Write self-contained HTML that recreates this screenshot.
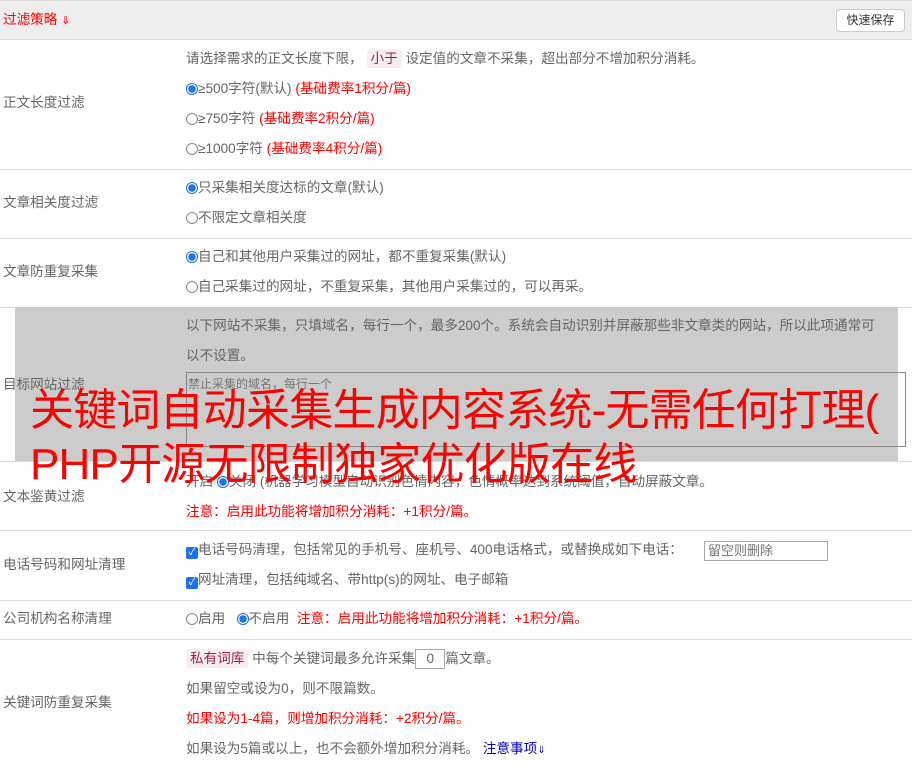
<!DOCTYPE html>
<html><head><meta charset="utf-8"><style>
body{margin:0;width:912px;height:768px;background:#fff;font-family:"Liberation Sans","Noto Sans CJK SC",sans-serif;font-size:13.6px;color:#666;position:relative;overflow:hidden}
.a{position:absolute;line-height:20px;white-space:nowrap}
.hr{position:absolute;left:0;width:912px;height:1px;background:#ddd}
.r{color:#f00}
.rad{display:inline-block;width:12px;height:12px;border:1px solid #888;border-radius:50%;vertical-align:-2px;box-sizing:border-box;background:#fff}
.on{border:1px solid #1a73e8;background:radial-gradient(circle,#1a73e8 3.5px,#fff 4px)}
.cb{display:inline-block;width:12px;height:12px;background:#1a73e8;border-radius:2px;vertical-align:-1px;color:#fff;font-size:10px;line-height:12px;text-align:center}
.tag{background:#f7eef0;color:#a0204a;padding:2px 4px;border-radius:3px}
</style></head><body>
<div style="position:absolute;left:0;top:0;width:912px;height:39px;background:#eee;border-top:1px solid #ddd;box-sizing:border-box"></div>
<div class="a r" style="left:3px;top:10px">过滤策略 <span style="font-size:11px">&#8659;</span></div>
<div style="position:absolute;left:836px;top:9px;width:69px;height:23px;background:#fff;border:1px solid #ccc;border-radius:4px;box-sizing:border-box;text-align:center;line-height:21px;color:#333;font-size:12px">快速保存</div>
<div class="hr" style="top:39px"></div>
<div class="a" style="left:186px;top:49px">请选择需求的正文长度下限， <span class="tag">小于</span> 设定值的文章不采集，超出部分不增加积分消耗。</div>
<div class="a" style="left:186px;top:79px"><span class="rad on"></span>≥500字符(默认) <span class="r">(基础费率1积分/篇)</span></div>
<div class="a" style="left:186px;top:109px"><span class="rad"></span>≥750字符 <span class="r">(基础费率2积分/篇)</span></div>
<div class="a" style="left:186px;top:139px"><span class="rad"></span>≥1000字符 <span class="r">(基础费率4积分/篇)</span></div>
<div class="a" style="left:3px;top:93px">正文长度过滤</div>
<div class="hr" style="top:169px"></div>
<div class="a" style="left:186px;top:178px"><span class="rad on"></span>只采集相关度达标的文章(默认)</div>
<div class="a" style="left:186px;top:208px"><span class="rad"></span>不限定文章相关度</div>
<div class="a" style="left:3px;top:193px">文章相关度过滤</div>
<div class="hr" style="top:238px"></div>
<div class="a" style="left:186px;top:247px"><span class="rad on"></span>自己和其他用户采集过的网址，都不重复采集(默认)</div>
<div class="a" style="left:186px;top:277px"><span class="rad"></span>自己采集过的网址，不重复采集，其他用户采集过的，可以再采。</div>
<div class="a" style="left:3px;top:262px">文章防重复采集</div>
<div class="hr" style="top:307px"></div>
<div style="position:absolute;left:15px;top:307px;width:883px;height:154px;background:#ccc"></div>
<div class="a" style="left:3px;top:375px">目标网站过滤</div>
<div class="a" style="left:186px;top:316px">以下网站不采集，只填域名，每行一个，最多200个。系统会自动识别并屏蔽那些非文章类的网站，所以此项通常可</div>
<div class="a" style="left:186px;top:346px">以不设置。</div>
<div style="position:absolute;left:186px;top:372px;width:720px;height:75px;border:1px solid #888;box-sizing:border-box;font-size:12px;padding:2px 1px;color:#777">禁止采集的域名，每行一个</div>
<div class="hr" style="top:461px"></div>
<div class="a" style="left:186px;top:472px">开启 <span class="rad on"></span>关闭 (机器学习模型自动识别色情内容，色情概率达到系统阈值，自动屏蔽文章。</div>
<div class="a r" style="left:186px;top:502px">注意：启用此功能将增加积分消耗：+1积分/篇。</div>
<div class="a" style="left:3px;top:487px">文本鉴黄过滤</div>
<div style="position:absolute;left:30px;top:384px;font-size:44px;line-height:54px;color:#f00;white-space:nowrap;letter-spacing:-0.8px">关键词自动采集生成内容系统-无需任何打理(<br>PHP开源无限制独家优化版在线</div>
<div class="hr" style="top:530px"></div>
<div class="a" style="left:186px;top:540px"><span class="cb">✓</span>电话号码清理，包括常见的手机号、座机号、400电话格式，或替换成如下电话：</div>
<div style="position:absolute;left:704px;top:541px;width:124px;height:20px;border:1px solid #aaa;box-sizing:border-box;font-size:13px;line-height:18px;padding-left:3px;color:#777;background:#fff">留空则删除</div>
<div class="a" style="left:186px;top:570px"><span class="cb">✓</span>网址清理，包括纯域名、带http(s)的网址、电子邮箱</div>
<div class="a" style="left:3px;top:555px">电话号码和网址清理</div>
<div class="hr" style="top:600px"></div>
<div class="a" style="left:186px;top:609px"><span class="rad"></span>启用 &nbsp;&nbsp;<span class="rad on"></span>不启用 &nbsp;<span class="r">注意：启用此功能将增加积分消耗：+1积分/篇。</span></div>
<div class="a" style="left:3px;top:609px">公司机构名称清理</div>
<div class="hr" style="top:639px"></div>
<div class="a" style="left:186px;top:649px"><span class="tag">私有词库</span> 中每个关键词最多允许采集<span style="display:inline-block;width:28px;height:18px;border:1px solid #aaa;text-align:center;line-height:18px;vertical-align:middle">0</span>篇文章。</div>
<div class="a" style="left:186px;top:679px">如果留空或设为0，则不限篇数。</div>
<div class="a r" style="left:186px;top:709px">如果设为1-4篇，则增加积分消耗：+2积分/篇。</div>
<div class="a" style="left:186px;top:739px">如果设为5篇或以上，也不会额外增加积分消耗。 <span style="color:#00c">注意事项<span style="font-size:10px">&#8659;</span></span></div>
<div class="a" style="left:3px;top:693px">关键词防重复采集</div>
</body></html>
